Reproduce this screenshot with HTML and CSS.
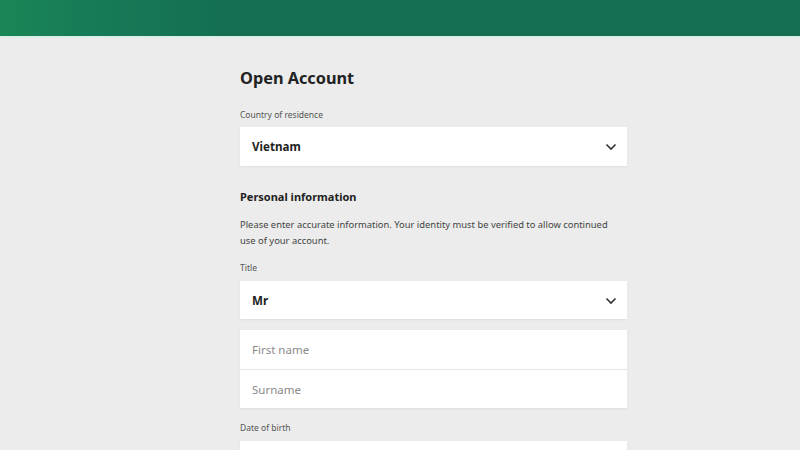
FILE: index.html
```html
<!DOCTYPE html>
<html lang="en">
<head>
<meta charset="utf-8">
<title>Open Account</title>
<link rel="stylesheet" href="styles.css">
</head>
<body>
<header class="topbar"></header>
<div class="topline"></div>
<main class="form">
  <h1 class="title">Open Account</h1>

  <label class="label label-first">Country of residence</label>
  <div class="select">
    <span class="select-value">Vietnam</span>
    <svg class="chev" width="12" height="8" viewBox="0 0 12 8"><path d="M1.5 1.5 L6 6 L10.5 1.5" fill="none" stroke="#333" stroke-width="1.6"/></svg>
  </div>

  <h2 class="section">Personal information</h2>
  <p class="desc">Please enter accurate information. Your identity must be verified to allow continued use of your account.</p>

  <label class="label">Title</label>
  <div class="select select-short">
    <span class="select-value">Mr</span>
    <svg class="chev" width="12" height="8" viewBox="0 0 12 8"><path d="M1.5 1.5 L6 6 L10.5 1.5" fill="none" stroke="#333" stroke-width="1.6"/></svg>
  </div>

  <div class="group">
    <div class="field">First name</div>
    <div class="field">Surname</div>
  </div>

  <label class="label label-dob">Date of birth</label>
  <div class="select select-dob"></div>
</main>
</body>
</html>
```

FILE: styles.css
```css
html, body {
  margin: 0;
  padding: 0;
}
body {
  background: #ebeceb;
  font-family: "Noto Sans", "Open Sans", sans-serif;
  color: #222;
  height: 450px;
  overflow: hidden;
}
.topbar {
  height: 36px;
  background: linear-gradient(to right, #1a8655 0%, #177c57 10%, #146f52 28%, #146f52 100%);
}
.topline {
  height: 2px;
  background: #dbeee7;
}
.form {
  width: 387px;
  margin-left: 240px;
  padding-top: 28px;
  display: flex;
  flex-direction: column;
}
.title {
  margin: 0;
  font-size: 16.3px;
  line-height: 24px;
  font-weight: 700;
  color: #222;
}
.label {
  display: block;
  font-size: 8.5px;
  line-height: 12px;
  color: #555;
  margin-top: 13px;
}
.label-first {
  margin-top: 19px;
}
.label-dob {
  margin-top: 14px;
}
.select {
  margin-top: 6px;
  height: 39px;
  background: #fff;
  box-shadow: 0 1px 2px rgba(0,0,0,0.06);
  display: flex;
  align-items: center;
  justify-content: space-between;
  padding: 0 12px;
}
.select-short {
  margin-top: 7px;
  height: 38px;
}
.select-dob {
  margin-top: 7px;
}
.select-value {
  font-size: 11.6px;
  font-weight: 700;
  color: #222;
}
.chev {
  margin-right: -2px;
  margin-top: 1px;
}
.section {
  margin: 23px 0 0;
  font-size: 11px;
  line-height: 16px;
  font-weight: 700;
  color: #222;
}
.desc {
  margin: 12px 0 0;
  font-size: 9.4px;
  line-height: 16px;
  color: #444;
  padding-right: 16px;
}
.group {
  margin-top: 11px;
  background: #fff;
  box-shadow: 0 1px 2px rgba(0,0,0,0.06);
  display: flex;
  flex-direction: column;
}
.field {
  height: 39px;
  display: flex;
  align-items: center;
  padding: 0 12px;
  font-size: 11.5px;
  color: #8a8a8a;
}
.field + .field {
  border-top: 1px solid #e6e6e6;
  height: 38px;
}
```
